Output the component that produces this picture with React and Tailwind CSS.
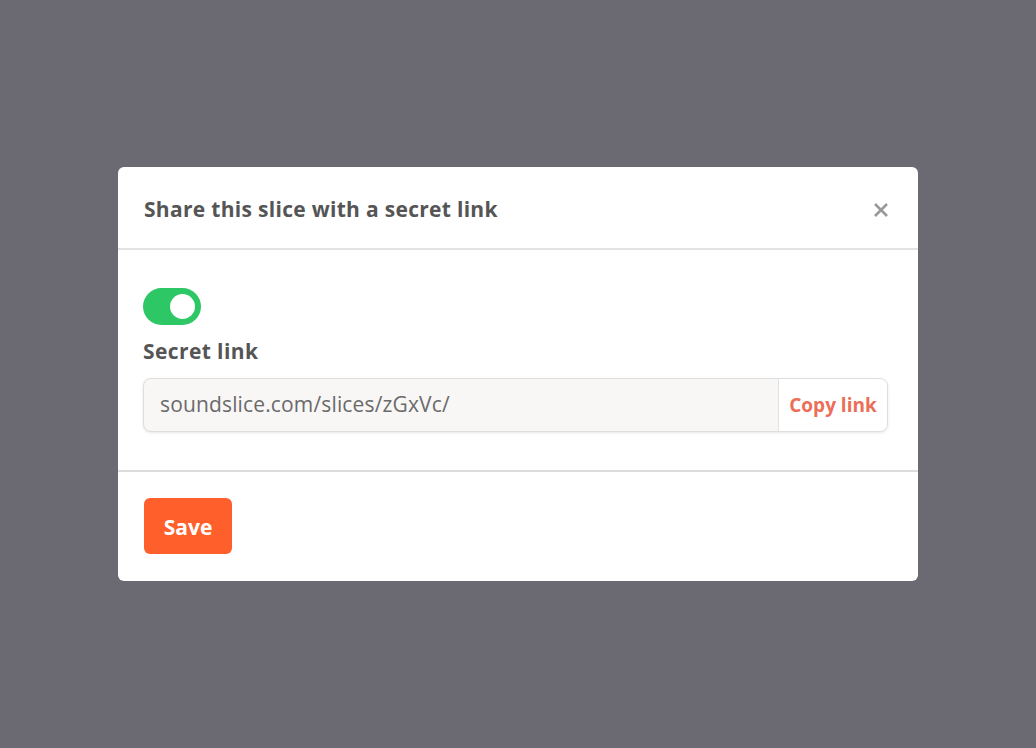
import { useState } from 'react';

function Toggle({ on, onChange }) {
    return (
        <button
            type="button"
            onClick={() => onChange(!on)}
            className={`relative block h-[37px] w-[58px] rounded-full ${on ? 'bg-[#2ec766]' : 'bg-[#ccc]'}`}
        >
            <span
                className={`absolute top-[6px] h-[25px] w-[25px] rounded-full bg-white ${on ? 'left-[27px]' : 'left-[6px]'}`}
            />
        </button>
    );
}

export default function App() {
    const [secret, setSecret] = useState(true);

    return (
        <div className="flex h-[748px] w-full items-center justify-center bg-[#6b6a73] font-['Open_Sans','Liberation_Sans',sans-serif]">
            <div className="w-[800px] rounded-md bg-white">
                {/* Header */}
                <div className="flex h-[83px] items-center justify-between border-b-2 border-[#e3e3e3] pl-[26px] pr-[29px] pt-[5px]">
                    <h2 className="text-[21px] font-bold tracking-[0.3px] text-[#555]">Share this slice with a secret link</h2>
                    <button type="button" className="text-[#999]">
                        <svg width="16" height="16" viewBox="0 0 16 16" fill="none" stroke="currentColor" strokeWidth="2.6">
                            <path d="M2 2l12 12M14 2L2 14" />
                        </svg>
                    </button>
                </div>

                {/* Body */}
                <div className="border-b-2 border-[#dcdcdc] px-[25px] pb-[38px] pt-[38px]">
                    <Toggle on={secret} onChange={setSecret} />
                    <div className="mt-[12px] text-[21px] font-bold leading-[28px] tracking-[0.4px] text-[#555]">Secret link</div>
                    <div className="mr-[5px] mt-[13px] flex h-[54px] overflow-hidden rounded-lg border border-[#dedede] bg-[#f8f7f6] shadow-[0_1px_3px_rgba(0,0,0,0.1)]">
                        <div className="flex flex-1 items-center pl-[16px] text-[21px] tracking-[0.15px] text-[#6a6a6a]">
                            soundslice.com/slices/zGxVc/
                        </div>
                        <button
                            type="button"
                            className="w-[109px] border-l border-[#e2e2e2] bg-white text-[19px] font-bold text-[#ec6e58]"
                        >
                            Copy link
                        </button>
                    </div>
                </div>

                {/* Footer */}
                <div className="px-[26px] pb-[27px] pt-[26px]">
                    <button
                        type="button"
                        className="h-[56px] w-[88px] rounded-md bg-[#ff5f2b] pt-[3px] text-[21px] font-bold text-white"
                    >
                        Save
                    </button>
                </div>
            </div>
        </div>
    );
}
